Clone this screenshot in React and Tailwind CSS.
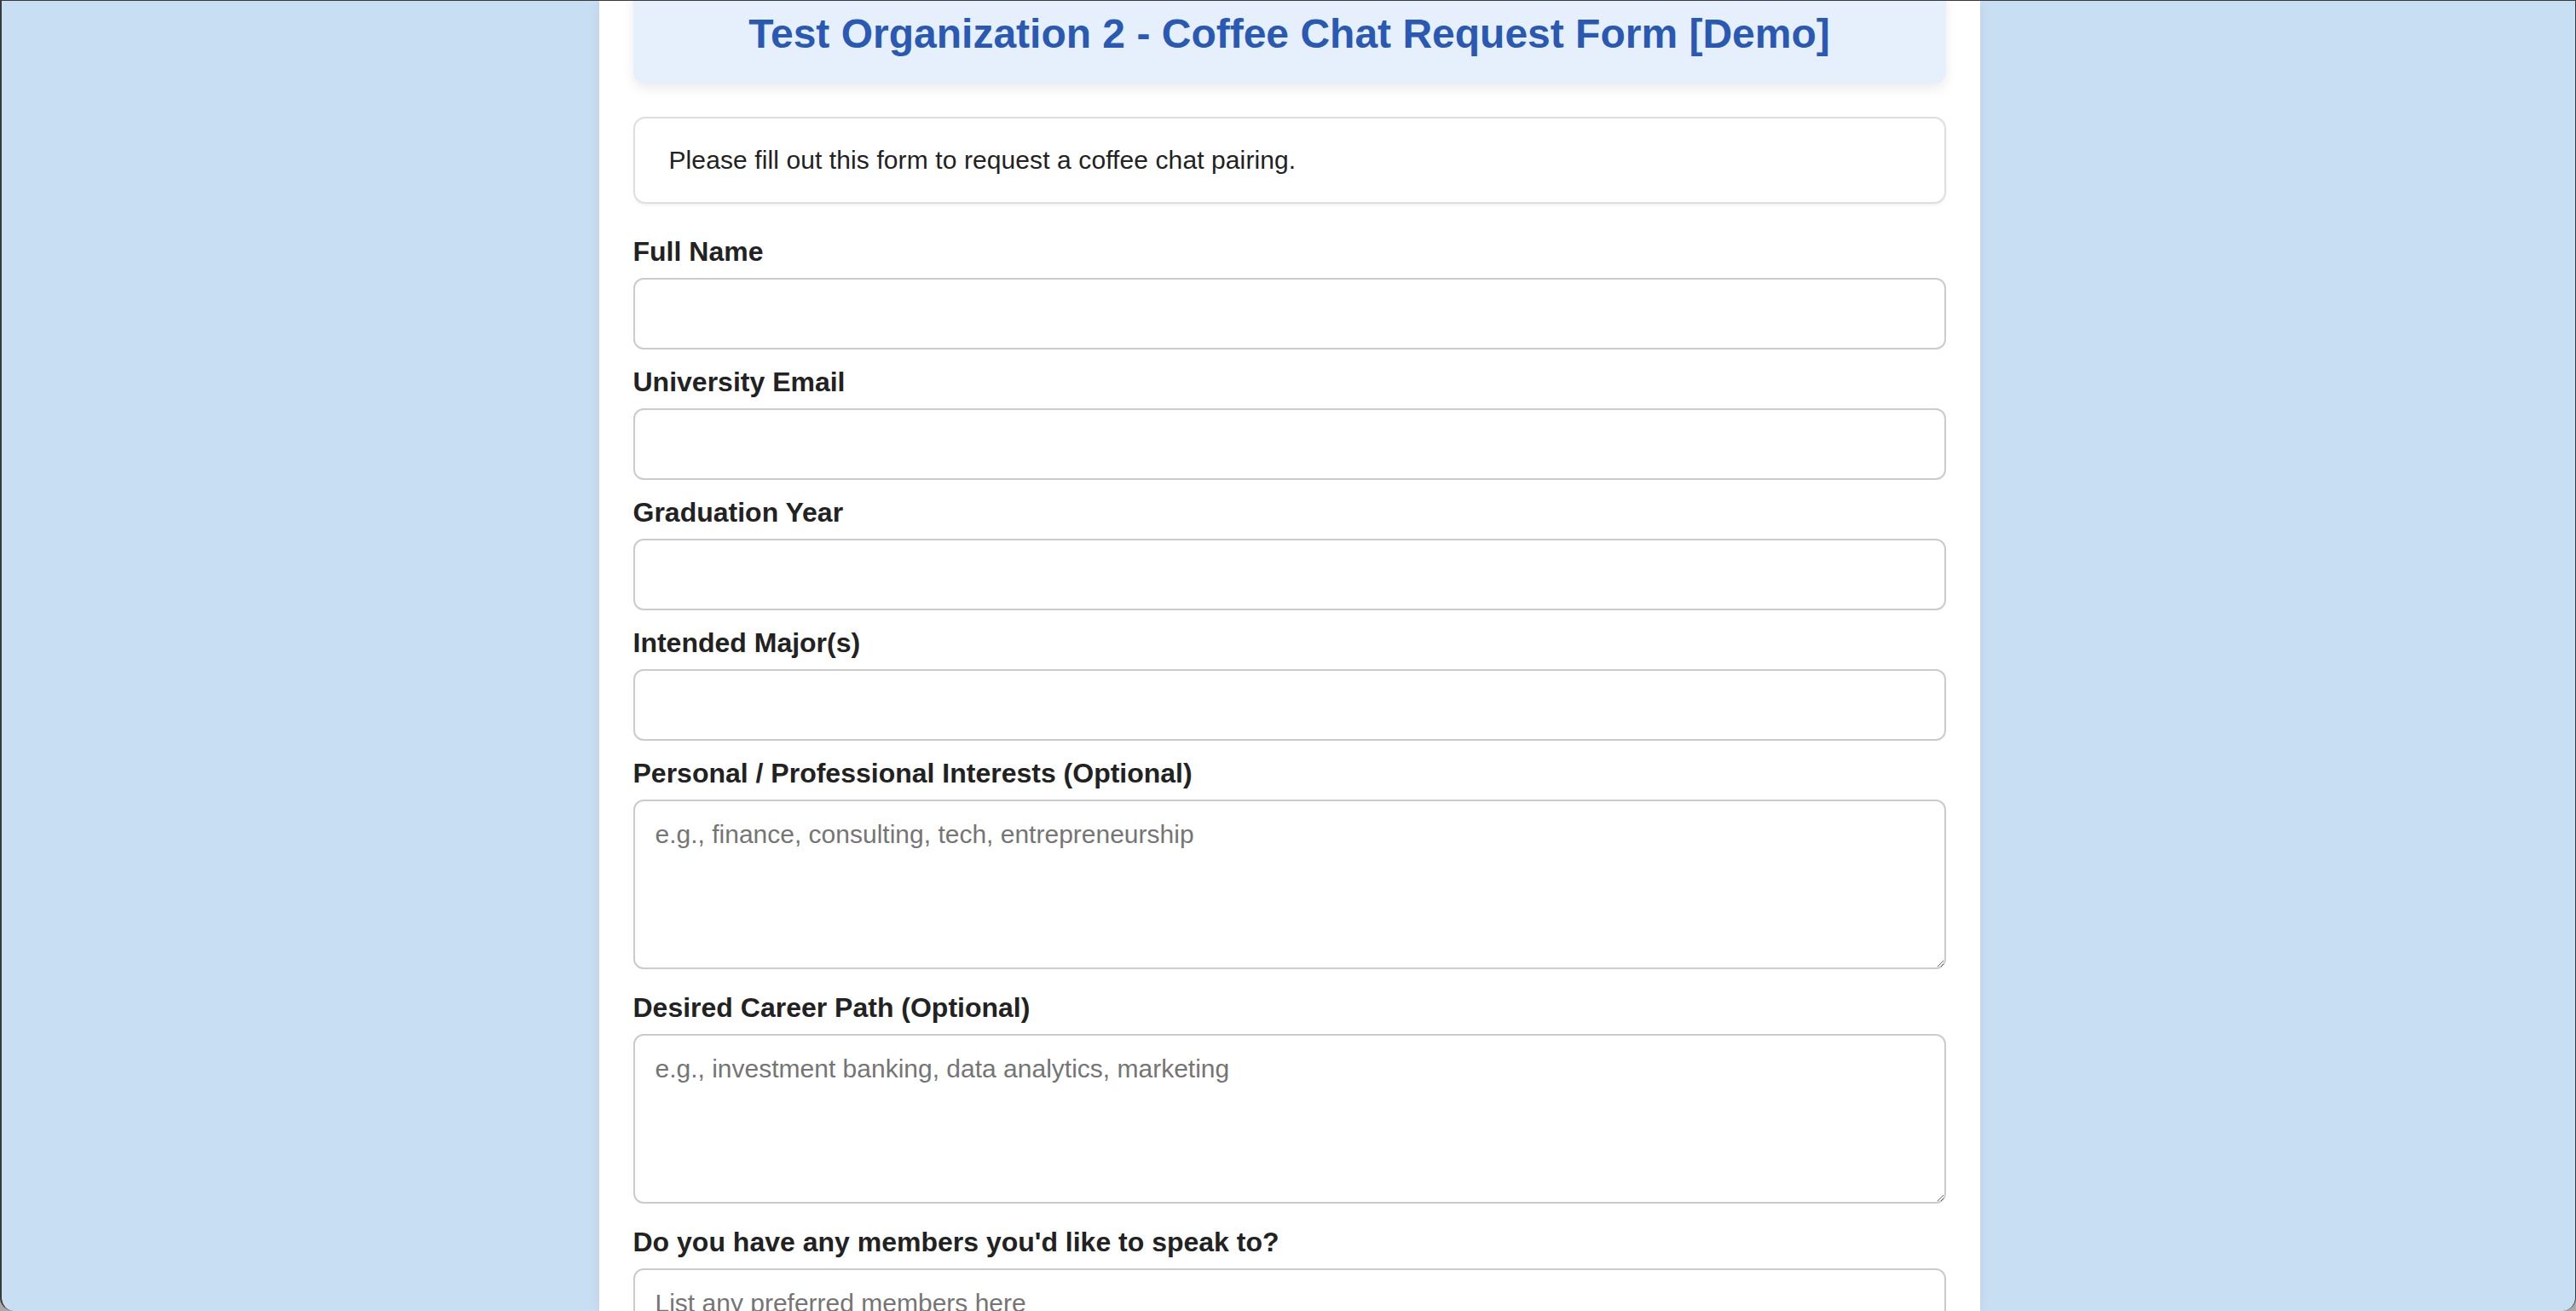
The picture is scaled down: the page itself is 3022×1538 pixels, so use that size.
import React from "react";

function Field({ label, type = "input", placeholder }) {
  return (
    <div className="flex flex-col">
      <label className="block text-[32px] leading-[37px] font-bold text-[#222] mb-[12px]">
        {label}
      </label>
      {type === "textarea" ? (
        <textarea
          placeholder={placeholder}
          className="block w-full h-[199px] mb-[27px] border-2 border-[#cbcbcb] rounded-[12px] bg-white px-[24px] pt-[22px] text-[30px] leading-[34px] text-[#222] placeholder:text-[#757575] outline-none"
        />
      ) : (
        <input
          type="text"
          placeholder={placeholder}
          className="block w-full h-[84px] mb-[20px] border-2 border-[#cbcbcb] rounded-[12px] bg-white px-[24px] text-[30px] text-[#222] placeholder:text-[#757575] outline-none"
        />
      )}
    </div>
  );
}

export default function App() {
  return (
    <div className="w-full h-[1538px] bg-[#a9a9a9] overflow-hidden font-['Liberation_Sans',Arial,sans-serif]">
      <div className="w-full h-[1538px] bg-[#c8def3] border-t border-l-2 border-r border-[#3a3a3a] rounded-b-[16px] overflow-hidden flex justify-center">
        <div className="w-[1620px] bg-white px-[40px] ml-[2px] shadow-[0_0_16px_rgba(0,0,0,0.06)]">
          <div className="-mt-[21px] bg-[#e6f0fc] rounded-[13px] pt-[32px] pb-[31px] shadow-[0_6px_14px_rgba(0,0,0,0.08)]">
            <h1 className="text-center text-[48px] leading-[55px] font-bold text-[#2a59b3]">
              Test Organization 2 - Coffee Chat Request Form [Demo]
            </h1>
          </div>

          <div className="mt-[39px] border-2 border-[#dedede] rounded-[14px] px-[40px] py-[32px] shadow-[0_2px_3px_rgba(0,0,0,0.06)]">
            <p className="text-[30px] leading-[34px] text-[#222] tracking-[0.1px]">
              Please fill out this form to request a coffee chat pairing.
            </p>
          </div>

          <form className="mt-[38px] flex flex-col" onSubmit={(e) => e.preventDefault()}>
            <Field label="Full Name" />
            <Field label="University Email" />
            <Field label="Graduation Year" />
            <Field label="Intended Major(s)" />
            <Field
              label="Personal / Professional Interests (Optional)"
              type="textarea"
              placeholder="e.g., finance, consulting, tech, entrepreneurship"
            />
            <Field
              label="Desired Career Path (Optional)"
              type="textarea"
              placeholder="e.g., investment banking, data analytics, marketing"
            />
            <Field
              label="Do you have any members you'd like to speak to?"
              type="textarea"
              placeholder="List any preferred members here"
            />
          </form>
        </div>
      </div>
    </div>
  );
}
